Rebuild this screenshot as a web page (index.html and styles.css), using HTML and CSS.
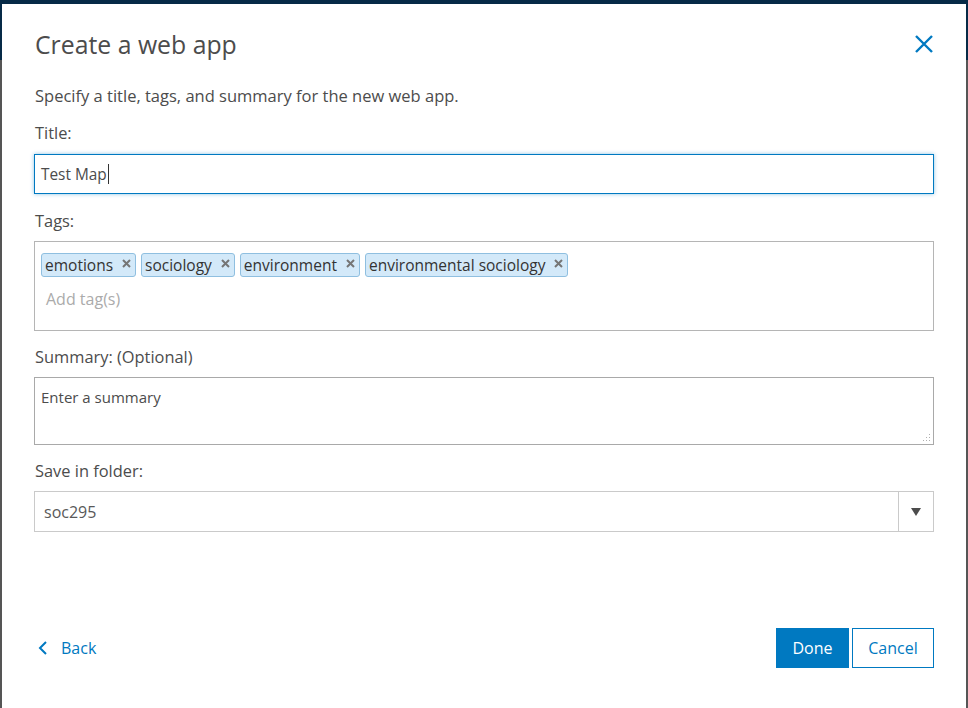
FILE: index.html
```html
<!DOCTYPE html>
<html>
<head>
<meta charset="utf-8">
<link rel="stylesheet" href="styles.css">
</head>
<body>
<div class="backdrop">
  <div class="dialog">
    <div class="header">
      <h1 class="title">Create a web app</h1>
      <button class="close" aria-label="Close">
        <svg width="20" height="20" viewBox="0 0 20 20"><path d="M2 2 L18 18 M18 2 L2 18" stroke="#0079c1" stroke-width="2.4" fill="none"/></svg>
      </button>
    </div>
    <p class="intro">Specify a title, tags, and summary for the new web app.</p>

    <label class="label first">Title:</label>
    <div class="input focused"><span>Test Map</span><span class="caret"></span></div>

    <label class="label">Tags:</label>
    <div class="tags">
      <div class="chips">
        <span class="chip">emotions<svg class="x" width="9" height="9" viewBox="0 0 9 9"><path d="M1 1 L8 8 M8 1 L1 8" stroke="#757575" stroke-width="2"/></svg></span>
        <span class="chip">sociology<svg class="x" width="9" height="9" viewBox="0 0 9 9"><path d="M1 1 L8 8 M8 1 L1 8" stroke="#757575" stroke-width="2"/></svg></span>
        <span class="chip">environment<svg class="x" width="9" height="9" viewBox="0 0 9 9"><path d="M1 1 L8 8 M8 1 L1 8" stroke="#757575" stroke-width="2"/></svg></span>
        <span class="chip">environmental sociology<svg class="x" width="9" height="9" viewBox="0 0 9 9"><path d="M1 1 L8 8 M8 1 L1 8" stroke="#757575" stroke-width="2"/></svg></span>
      </div>
      <div class="placeholder">Add tag(s)</div>
    </div>

    <label class="label mid">Summary: (Optional)</label>
    <div class="textarea">Enter a summary
      <svg class="grip" width="8" height="8" viewBox="0 0 8 8"><g fill="#b0b0b0"><rect x="6" y="0" width="1" height="1"/><rect x="3" y="3" width="1" height="1"/><rect x="6" y="3" width="1" height="1"/><rect x="0" y="6" width="1" height="1"/><rect x="3" y="6" width="1" height="1"/><rect x="6" y="6" width="1" height="1"/></g></svg>
    </div>

    <label class="label mid">Save in folder:</label>
    <div class="select">
      <span class="value">soc295</span>
      <span class="arrow"><svg width="10" height="8" viewBox="0 0 10 8"><path d="M0 0 H10 L5 8 Z" fill="#4c4c4c"/></svg></span>
    </div>

    <div class="footer">
      <a class="back"><svg width="10" height="14" viewBox="0 0 10 14"><path d="M8 1 L2 7 L8 13" stroke="#0079c1" stroke-width="2" fill="none"/></svg><span>Back</span></a>
      <div class="buttons">
        <button class="btn primary">Done</button>
        <button class="btn secondary">Cancel</button>
      </div>
    </div>
  </div>
</div>
</body>
</html>
```
FILE: styles.css
```css
* { box-sizing: border-box; }
html, body { margin: 0; padding: 0; height: 100%; overflow: hidden; }
body { font-family: "Open Sans", "Lato", sans-serif; color: #4c4c4c; }
.backdrop {
  width: 968px; height: 708px;
  background: linear-gradient(to bottom, #062a47 0, #062a47 60px, #555555 60px);
  padding: 4px 2px 0 2px;
}
.dialog {
  background: #fff;
  height: 704px;
  padding: 0 32px;
  display: flex;
  flex-direction: column;
}
.header {
  display: flex; justify-content: space-between; align-items: center;
  height: 80px;
}
.title {
  margin: 0; font-weight: 400; font-size: 24.8px; color: #4c4c4c;
  padding-left: 1px;
}
.close { background: none; border: 0; padding: 0; width: 20px; height: 20px; cursor: pointer; }
.intro { margin: 0 0 0 1px; font-size: 16.5px; line-height: 24px; height: 24px; }
.label { display: block; font-size: 16.4px; line-height: 20px; margin: 17px 0 10px 1px; }
.label.first { margin-top: 15px; margin-bottom: 11px; }
.label.mid { margin-top: 16px; }
.input {
  height: 40px; border: 1px solid #0079c1; box-shadow: 0 0 4px rgba(0,121,193,0.45);
  font-size: 15.4px; padding: 0 6px; display: flex; align-items: center; color: #4c4c4c;
}
.caret { width: 1px; height: 20px; background: #333; margin-left: 1px; }
.tags {
  height: 90px; border: 1px solid #b5b5b5; padding: 11px 6px 0;
}
.chips { display: flex; gap: 5px; }
.chip {
  display: inline-flex; align-items: center;
  height: 24px; padding: 0 4px 0 3px;
  background: #d3e9f9; border: 1px solid #8fbfe0; border-radius: 3px;
  font-size: 15.5px; color: #333;
}
.chip .x { margin-left: 9px; position: relative; top: -2px; }
.placeholder { color: #ababab; font-size: 16px; margin: 11px 0 0 5px; }
.textarea {
  position: relative; height: 68px; border: 1px solid #a9a9a9;
  padding: 9px 6px; font-size: 15px; color: #4c4c4c;
}
.grip { position: absolute; right: 2px; bottom: 2px; }
.select {
  height: 41px; border: 1px solid #cacaca; display: flex; align-items: center;
}
.select .value { flex: 1; padding-left: 9px; font-size: 16px; color: #595959; }
.select .arrow { width: 35px; height: 100%; border-left: 1px solid #cacaca; display: flex; align-items: center; justify-content: center; }
.footer {
  margin-top: auto; margin-bottom: 40px;
  display: flex; justify-content: space-between; align-items: center;
}
.back { display: flex; align-items: center; gap: 13px; color: #0079c1; font-size: 16px; padding-left: 4px; }
.buttons { display: flex; gap: 3px; }
.btn { height: 40px; font-family: inherit; font-size: 16px; padding: 0; cursor: pointer; }
.btn.primary { background: #0079c1; color: #fff; border: 1px solid #0079c1; width: 73px; }
.btn.secondary { background: #fff; color: #0079c1; border: 1px solid #0079c1; width: 82px; }
```
